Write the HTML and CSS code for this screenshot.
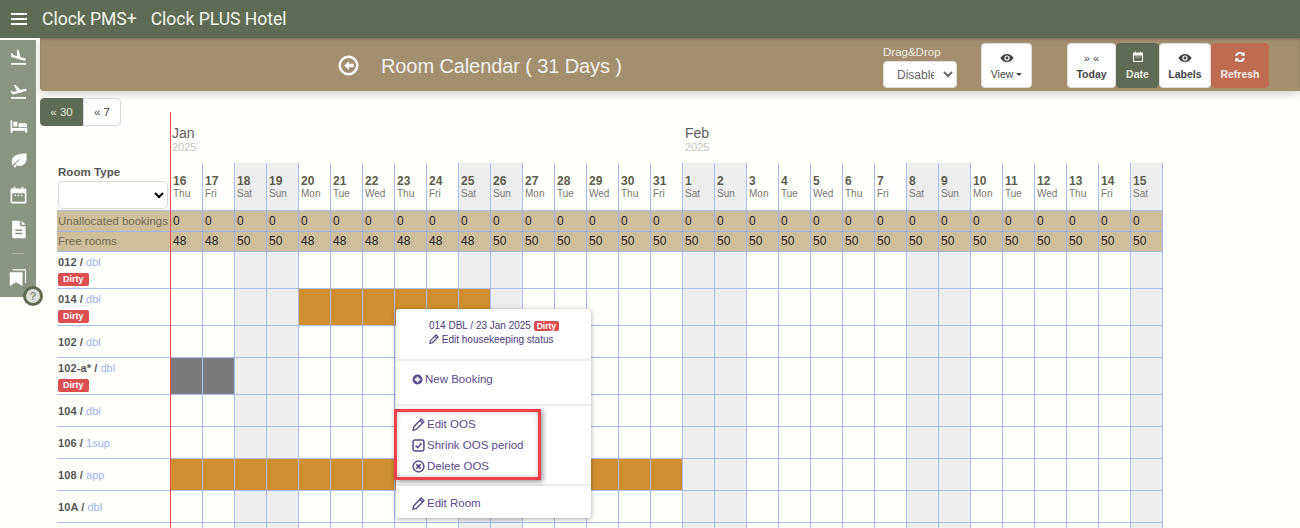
FILE: index.html
```html
<!DOCTYPE html>
<html lang="en">
<head>
<meta charset="utf-8">
<title>Room Calendar</title>
<link rel="stylesheet" href="styles.css">
</head>
<body>
<header class="topbar">
  <button class="burger" aria-label="Menu"><span></span><span></span><span></span></button>
  <span class="brand">Clock PMS+</span>
  <span class="brand">Clock PLUS Hotel</span>
</header>
<div class="shell">
  <nav class="sidebar">
    <a class="nav-item"><svg viewBox="0 0 24 24" class="nav-icon"><path d="M2.5 19h19v2h-19zm7.18-5.73l4.35 1.16 5.31 1.42c.8.21 1.62-.26 1.84-1.06.21-.8-.26-1.62-1.06-1.84l-5.31-1.42-2.76-9.02L10.12 2v8.28L5.15 8.95l-.93-2.32-1.45-.39v5.17l1.6.43 5.31 1.43z"/></svg></a>
    <a class="nav-item"><svg viewBox="0 0 24 24" class="nav-icon"><path d="M2.5 19h19v2h-19zm19.57-9.36c-.21-.8-1.04-1.28-1.84-1.06L14.92 10l-6.9-6.43-1.93.51 4.14 7.17-4.97 1.33-1.97-1.54-1.45.39 1.82 3.16.77 1.33 1.6-.43 5.31-1.42 4.35-1.16L21 11.49c.81-.23 1.28-1.05 1.07-1.85z"/></svg></a>
    <a class="nav-item"><svg viewBox="0 0 24 24" class="nav-icon"><path d="M2 4h2v10h18a1 1 0 0 1 1 1v5h-2.5v-2.500h-16V20H2zM5.500 6h5v6h-5zM12 8h9a1.500 1.500 0 0 1 1.500 1.500V13H12z" fill-rule="evenodd"/></svg></a>
    <a class="nav-item"><svg viewBox="0 0 24 24" class="nav-icon"><path d="M22 3C14 3 5 4 3.500 12c-.5 2.500.3 5 1.200 6.500C8 13 12 11 15 10c-3.500 2.500-7 5.500-9 10l2 1c.7-1.300 1.200-2.200 1.800-3 3 1.500 7 1.200 9.700-1.500C23 13 22.500 7 22 3z"/></svg></a>
    <a class="nav-item"><svg viewBox="0 0 24 24" class="nav-icon"><path fill-rule="evenodd" d="M6 1h2v2h8V1h2v2h2.500A1.500 1.500 0 0 1 22 4.500v16a1.500 1.500 0 0 1-1.500 1.500h-17A1.500 1.500 0 0 1 2 20.500v-16A1.500 1.500 0 0 1 3.500 3H6zM4 9v11h16V9zM7 11h2v2H7zm4 0h2v2h-2zm4 0h2v2h-2z"/></svg></a>
    <a class="nav-item"><svg viewBox="0 0 24 24" class="nav-icon"><path fill-rule="evenodd" d="M5 1h9v7h7v13.500a1.500 1.500 0 0 1-1.500 1.500h-14.500A1.500 1.500 0 0 1 4 21.500v-19A1.500 1.500 0 0 1 5 1zM16 1l5 5h-5zM8 12v2h9v-2zm0 4v2h9v-2z"/></svg></a>
    <span class="nav-sep"></span>
    <a class="nav-item"><svg viewBox="0 0 24 24" class="nav-icon book"><path d="M1 5.500h17V24l-8.500-5L1 24z"/><path d="M5 2.500h17V20" fill="none" stroke="#fff" stroke-width="1.500"/></svg></a>
    <span class="help">?</span>
  </nav>
  <main class="main">
    <section class="subheader">
      <div class="title-block">
        <svg class="back" viewBox="0 0 24 24"><circle cx="12" cy="12" r="10" fill="none" stroke="#fff" stroke-width="2.800"/><path d="M12.500 7L7 12l5.500 5v-3H18v-4h-5.500z" fill="#fff"/></svg>
        <h1 class="title">Room Calendar ( 31 Days )</h1>
      </div>
      <div class="dnd">
        <label class="dnd-label">Drag&amp;Drop</label>
        <select class="dnd-select"><option>Disabled</option></select>
      </div>
      <button class="tool view-btn"><svg class="eye" viewBox="0 0 24 16"><path fill-rule="evenodd" d="M12 1C7 1 3 4 .5 8 3 12 7 15 12 15s9-3 11.500-7C21 4 17 1 12 1zm0 2.500a4.500 4.500 0 1 1 0 9 4.500 4.500 0 0 1 0-9z"/><circle cx="12" cy="8" r="2.500"/></svg><span>View <i class="caret"></i></span></button>
      <div class="tool-group">
        <button class="tool bold"><span class="arrows">» «</span><span>Today</span></button>
        <button class="tool bold active"><svg class="cal" viewBox="0 0 24 24"><path fill-rule="evenodd" fill="#fff" d="M6 1h2v2h8V1h2v2h2.500A1.500 1.500 0 0 1 22 4.500v16a1.500 1.500 0 0 1-1.500 1.500h-17A1.500 1.500 0 0 1 2 20.500v-16A1.500 1.500 0 0 1 3.500 3H6zM4 9v11h16V9zM7 11h2v2H7zm4 0h2v2h-2zm4 0h2v2h-2z"/></svg><span>Date</span></button>
        <button class="tool bold"><svg class="eye" viewBox="0 0 24 16"><path fill-rule="evenodd" d="M12 1C7 1 3 4 .5 8 3 12 7 15 12 15s9-3 11.500-7C21 4 17 1 12 1zm0 2.500a4.500 4.500 0 1 1 0 9 4.500 4.500 0 0 1 0-9z"/><circle cx="12" cy="8" r="2.500"/></svg><span>Labels</span></button>
        <button class="tool bold refresh"><svg class="ref" viewBox="0 0 24 24"><path fill="none" stroke="#fff" stroke-width="3.600" d="M4 10a8.500 8.500 0 0 1 14.500-3.500M20 14a8.500 8.500 0 0 1-14.500 3.500"/><path fill="#fff" d="M21.500 1.500v8h-8zM2.500 22.500v-8h8z"/></svg><span>Refresh</span></button>
      </div>
    </section>
    <div class="tabs"><button class="tab on">« 30</button><button class="tab">« 7</button></div>
    <div class="months">
      <div class="month"><div class="month-name">Jan</div><div class="month-year">2025</div></div>
      <div class="month"><div class="month-name">Feb</div><div class="month-year">2025</div></div>
    </div>
    <div class="calendar">
      <div class="row head-row">
        <div class="label head-label"><div class="rt">Room Type</div><select class="rt-select"><option></option></select></div>
        <div class="cells">
          <div class="day"><b>16</b><span>Thu</span></div><div class="day"><b>17</b><span>Fri</span></div><div class="day we"><b>18</b><span>Sat</span></div><div class="day we"><b>19</b><span>Sun</span></div><div class="day"><b>20</b><span>Mon</span></div><div class="day"><b>21</b><span>Tue</span></div><div class="day"><b>22</b><span>Wed</span></div><div class="day"><b>23</b><span>Thu</span></div><div class="day"><b>24</b><span>Fri</span></div><div class="day we"><b>25</b><span>Sat</span></div><div class="day we"><b>26</b><span>Sun</span></div><div class="day"><b>27</b><span>Mon</span></div><div class="day"><b>28</b><span>Tue</span></div><div class="day"><b>29</b><span>Wed</span></div><div class="day"><b>30</b><span>Thu</span></div><div class="day"><b>31</b><span>Fri</span></div><div class="day we"><b>1</b><span>Sat</span></div><div class="day we"><b>2</b><span>Sun</span></div><div class="day"><b>3</b><span>Mon</span></div><div class="day"><b>4</b><span>Tue</span></div><div class="day"><b>5</b><span>Wed</span></div><div class="day"><b>6</b><span>Thu</span></div><div class="day"><b>7</b><span>Fri</span></div><div class="day we"><b>8</b><span>Sat</span></div><div class="day we"><b>9</b><span>Sun</span></div><div class="day"><b>10</b><span>Mon</span></div><div class="day"><b>11</b><span>Tue</span></div><div class="day"><b>12</b><span>Wed</span></div><div class="day"><b>13</b><span>Thu</span></div><div class="day"><b>14</b><span>Fri</span></div><div class="day we"><b>15</b><span>Sat</span></div>
        </div>
      </div>
      <div class="row sum-row h21">
        <div class="label sum-label">Unallocated bookings</div>
        <div class="cells"><div class="num">0</div><div class="num">0</div><div class="num">0</div><div class="num">0</div><div class="num">0</div><div class="num">0</div><div class="num">0</div><div class="num">0</div><div class="num">0</div><div class="num">0</div><div class="num">0</div><div class="num">0</div><div class="num">0</div><div class="num">0</div><div class="num">0</div><div class="num">0</div><div class="num">0</div><div class="num">0</div><div class="num">0</div><div class="num">0</div><div class="num">0</div><div class="num">0</div><div class="num">0</div><div class="num">0</div><div class="num">0</div><div class="num">0</div><div class="num">0</div><div class="num">0</div><div class="num">0</div><div class="num">0</div><div class="num">0</div></div>
      </div>
      <div class="row sum-row h20">
        <div class="label sum-label">Free rooms</div>
        <div class="cells"><div class="num">48</div><div class="num">48</div><div class="num">50</div><div class="num">50</div><div class="num">48</div><div class="num">48</div><div class="num">48</div><div class="num">48</div><div class="num">48</div><div class="num">48</div><div class="num">50</div><div class="num">50</div><div class="num">50</div><div class="num">50</div><div class="num">50</div><div class="num">50</div><div class="num">50</div><div class="num">50</div><div class="num">50</div><div class="num">50</div><div class="num">50</div><div class="num">50</div><div class="num">50</div><div class="num">50</div><div class="num">50</div><div class="num">50</div><div class="num">50</div><div class="num">50</div><div class="num">50</div><div class="num">50</div><div class="num">50</div></div>
      </div>
      <div class="row tall"><div class="label room"><div><b>012 /</b> <em>dbl</em></div><span class="dirty">Dirty</span></div><div class="track"></div></div>
      <div class="row tall"><div class="label room"><div><b>014 /</b> <em>dbl</em></div><span class="dirty">Dirty</span></div><div class="track"><div class="bar orange b014"></div></div></div>
      <div class="row"><div class="label room mid"><div><b>102 /</b> <em>dbl</em></div></div><div class="track"></div></div>
      <div class="row tall"><div class="label room"><div><b>102-a* /</b> <em>dbl</em></div><span class="dirty">Dirty</span></div><div class="track"><div class="bar grey b102a"></div></div></div>
      <div class="row"><div class="label room mid"><div><b>104 /</b> <em>dbl</em></div></div><div class="track"></div></div>
      <div class="row"><div class="label room mid"><div><b>106 /</b> <em>1sup</em></div></div><div class="track"></div></div>
      <div class="row"><div class="label room mid"><div><b>108 /</b> <em>app</em></div></div><div class="track"><div class="bar orange b108"></div></div></div>
      <div class="row"><div class="label room mid"><div><b>10A /</b> <em>dbl</em></div></div><div class="track"></div></div>
      <div class="row"><div class="label room"></div><div class="track"></div></div>
    </div>
  </main>
</div>
<div class="now-line"></div>
<div class="popup">
  <div class="pop-sec pop-head">
    <div>014 DBL / 23 Jan 2025 <span class="dirty small">Dirty</span></div>
    <div class="pop-edit"><svg class="pi s10" viewBox="0 0 24 24"><path d="M17 2l5 5L8 21l-6 1.500L3.500 16zM15 6.500l2.500 2.500" fill="none" stroke="currentColor" stroke-width="2.600"/></svg> Edit housekeeping status</div>
  </div>
  <div class="pop-sec pop-new">
    <div class="pop-item"><svg class="pi plus" viewBox="0 0 24 24"><path fill-rule="evenodd" fill="currentColor" d="M12 1a11 11 0 1 1 0 22 11 11 0 0 1 0-22zm-2 5v4H6v4h4v4h4v-4h4v-4h-4V6z"/></svg>New Booking</div>
  </div>
  <div class="pop-sec pop-oos">
    <div class="pop-item"><svg class="pi" viewBox="0 0 24 24"><path d="M17 2l5 5L8 21l-6 1.500L3.500 16zM15 5l4 4" fill="none" stroke="currentColor" stroke-width="2.600"/></svg>Edit OOS</div>
    <div class="pop-item"><svg class="pi" viewBox="0 0 24 24"><rect x="2" y="2" width="20" height="20" rx="3" fill="none" stroke="currentColor" stroke-width="2.800"/><path d="M6.500 12l4 4 7-8" fill="none" stroke="currentColor" stroke-width="3"/></svg>Shrink OOS period</div>
    <div class="pop-item"><svg class="pi" viewBox="0 0 24 24"><circle cx="12" cy="12" r="10" fill="none" stroke="currentColor" stroke-width="2.800"/><path d="M8 8l8 8M16 8l-8 8" stroke="currentColor" stroke-width="3.200"/></svg>Delete OOS</div>
  </div>
  <div class="pop-sec pop-room">
    <div class="pop-item"><svg class="pi" viewBox="0 0 24 24"><path d="M17 2l5 5L8 21l-6 1.500L3.500 16zM15 5l4 4" fill="none" stroke="currentColor" stroke-width="2.600"/></svg>Edit Room</div>
  </div>
</div>
<div class="highlight"></div>
</body>
</html>
```
FILE: styles.css
```css
* { box-sizing: border-box; }
html, body { margin: 0; height: 528px; overflow: hidden; }
body { background: #fffffb; font-family: "Liberation Sans", Arial, sans-serif; color: #555; position: relative; }
button { font-family: inherit; }

.topbar { height: 38px; background: #5f6b54; display: flex; align-items: center; padding-left: 11px; color: #f4f5ef; }
.burger { width: 16px; height: 12px; padding: 0; border: 0; background: none; display: flex; flex-direction: column; justify-content: space-between; margin-right: 15px; }
.burger span { display: block; height: 2px; background: #fff; }
.brand { font-family: Roboto, sans-serif; font-size: 17.500px; margin-right: 14px; }

.shell { display: flex; height: 490px; overflow: hidden; }
.sidebar { width: 36px; height: 257px; margin-top: 2px; background: #8a9483; flex: none; margin-right: 4px; display: flex; flex-direction: column; align-items: center; position: relative; }
.nav-item { height: 34.500px; width: 100%; display: flex; align-items: center; justify-content: center; flex: none; }
.nav-icon { width: 19px; height: 19px; fill: #fff; }
.nav-sep { width: 12px; height: 1px; background: #a7afa0; margin: 6px 0 6px; flex: none; }
.nav-item .book { width: 18px; height: 18px; }
.help { position: absolute; left: 23px; bottom: -9px; width: 20px; height: 20px; border-radius: 50%; border: 3px solid #606b56; background: #dedfd8; color: #8a8f84; font-size: 11px; font-weight: bold; display: flex; align-items: center; justify-content: center; }

.main { flex: 1; min-width: 0; }
.subheader { height: 53px; background: #a38f6e; border-bottom-left-radius: 4px; box-shadow: 0 3px 8px rgba(0,0,0,.18), inset 0 2px 2px rgba(0,0,0,.15); display: flex; align-items: center; color: #f3f1ea; padding: 2px 0 0 298px; }
.title-block { display: flex; align-items: center; width: 545px; flex: none; }
.back { width: 21px; height: 21px; margin-right: 22px; flex: none; }
.title { font-size: 20px; font-weight: normal; margin: 2px 0 0; letter-spacing: -.1px; }
.dnd { width: 98px; flex: none; display: flex; flex-direction: column; margin-top: 3px; }
.dnd-label { font-size: 11.500px; line-height: 13px; color: #f1ede2; }
.dnd-select { width: 74px; height: 27px; margin-top: 2px; border: 1px solid #ddd; border-radius: 4px; background: #fff; color: #666; font: 12px "Liberation Sans", Arial, sans-serif; padding: 0 6px 0 9px; }
.tool { border: 1px solid #ddd; background: #fff; color: #444; border-radius: 4px; height: 45px; padding: 2px 0 0; font-size: 10.500px; display: flex; flex-direction: column; align-items: center; justify-content: center; gap: 5px; }
.view-btn { width: 51px; margin-right: 35px; flex: none; }
.tool-group { display: flex; }
.tool-group .tool:nth-child(1) { width: 49px; }
.tool-group .tool:nth-child(2) { width: 43px; }
.tool-group .tool:nth-child(3) { width: 52px; }
.tool-group .tool:nth-child(4) { width: 58px; }
.bold { font-weight: bold; }
.active { background: #5f6b54; border-color: #5f6b54; color: #e8eae2; }
.refresh { background: #bf6b52; border-color: #bf6b52; color: #f7efe9; }
.eye { width: 14px; height: 10px; fill: #444; }
.cal { width: 12px; height: 12px; margin-top: -3px; }
.ref { width: 12px; height: 12px; margin-top: -3px; }
.arrows { font-size: 11px; font-weight: normal; line-height: 9px; }
.caret { display: inline-block; width: 0; height: 0; border: 3px solid transparent; border-top-color: #444; border-bottom: 0; vertical-align: 2px; }

.tabs { display: flex; margin-top: 7px; height: 28px; }
.tab { height: 28px; border: 1px solid #d5d9df; background: #fff; color: #444; font-size: 11.500px; padding: 0; width: 38px; border-radius: 0 4px 4px 0; }
.tab.on { width: 43px; background: #5f6b54; border-color: #5f6b54; color: #e4e6de; border-radius: 4px 0 0 4px; }

.months { display: flex; margin-left: 132px; height: 37px; }
.month { width: 513px; }
.month-name { font-size: 14px; line-height: 15px; color: #5e5e5e; }
.month-year { font-size: 11px; line-height: 12px; color: #c4c4c4; }

.calendar { margin-left: 17px; width: 1106px; }
.row { display: flex; height: 32px; border-bottom: 1px solid #a9bcf8; }
.row.tall { height: 37px; }
.head-row { height: 48px; }
.h21 { height: 21px; }
.h20 { height: 20px; }
.label { width: 113px; flex: none; padding-left: 1px; }
.head-label { padding-top: 3px; }
.rt { font-size: 11.500px; font-weight: bold; line-height: 13px; letter-spacing: .05px; }
.rt-select { display: block; width: 110px; height: 28px; margin-top: 2px; background: #fff; border: 1px solid #ddd; border-radius: 4px; }
.cells { display: flex; flex: 1; border-right: 1px solid #a9bcf8; }
.day { width: 32px; flex: none; border-left: 1px solid #a9bcf8; padding: 11px 0 0 2px; display: flex; flex-direction: column; }
.day b { font-size: 12px; line-height: 14px; color: #5c5c4c; }
.day span { font-size: 10px; line-height: 11px; color: #777; }
.we { background: #eeeeee; }
.sum-row { background: #cebf9b; border-bottom-color: #9db2f5; }
.sum-row .cells { border-right-color: #9db2f5; }
.sum-label { font-size: 11.500px; color: #6e6c54; padding-left: 1px; white-space: nowrap; }
.num { width: 32px; flex: none; border-left: 1px solid #9db2f5; padding-left: 2px; font-size: 12px; color: #222; }
.h21 .sum-label, .h21 .num { line-height: 21px; }
.h20 .sum-label, .h20 .num { line-height: 18px; }

.room { font-size: 11px; padding-left: 1px; padding-top: 4px; }
.room.mid { display: flex; align-items: center; padding-top: 0; }
.room b { color: #555; letter-spacing: .1px; }
.room em { font-style: normal; color: #9fb3f5; }
.dirty { display: inline-block; background: #dc4f50; color: #fff; font-size: 9px; font-weight: bold; line-height: 13px; padding: 0 5px; border-radius: 2px; margin-top: 5px; }
.dirty.small { font-size: 8.500px; line-height: 10px; padding: 0 3px; margin-top: 0; }

.track { flex: 1; display: grid; grid-template-columns: repeat(31, 32px); border-right: 1px solid #a9bcf8;
  background:
    repeating-linear-gradient(90deg, #a9bcf8 0 1px, transparent 1px 32px),
    linear-gradient(#eee, #eee) 64px 0 / 64px 100% no-repeat,
    linear-gradient(#eee, #eee) 288px 0 / 64px 100% no-repeat,
    linear-gradient(#eee, #eee) 512px 0 / 64px 100% no-repeat,
    linear-gradient(#eee, #eee) 736px 0 / 64px 100% no-repeat,
    linear-gradient(#eee, #eee) 960px 0 / 32px 100% no-repeat;
}
.bar { grid-row: 1; }
.orange { background: repeating-linear-gradient(90deg, #a9bcf8 0 1px, #d08f2e 1px 32px); }
.grey { background: repeating-linear-gradient(90deg, #a9bcf8 0 1px, #7b7b7b 1px 32px); }
.b014 { grid-column: 5 / span 6; }
.b102a { grid-column: 1 / span 2; }
.b108 { grid-column: 1 / span 16; }

.now-line { position: absolute; left: 170px; top: 112px; bottom: 0; width: 1px; background: #f4494f; }

.popup { position: absolute; left: 396px; top: 309px; width: 195px; height: 209px; background: #fff; border-radius: 3px; box-shadow: 0 1px 5px rgba(0,0,0,.35); color: #5b4a8f; display: flex; flex-direction: column; }
.pop-sec { border-bottom: 2px solid #eeeeee; flex: none; }
.pop-sec:last-child { border-bottom: 0; }
.pop-head { height: 52px; padding: 10px 0 0 33px; font-size: 10px; line-height: 13px; color: #4b3a7c; }
.pop-edit { margin-top: 1px; }
.pop-new { height: 45px; padding: 8px 0 0 16px; }
.pop-oos { height: 80px; padding: 8px 0 0 16px; }
.pop-room { height: 32px; padding: 7px 0 0 16px; }
.pop-item { font-size: 11.500px; line-height: 21px; height: 21px; display: flex; align-items: center; gap: 2px; white-space: nowrap; }
.pop-item .pi { width: 13px; height: 13px; flex: none; }
.pop-item .plus { width: 11px; height: 11px; }
.pi.s10 { width: 10px; height: 10px; vertical-align: -1px; }

.highlight { position: absolute; left: 394px; top: 409px; width: 147px; height: 71px; border: 3px solid #f2404a; box-shadow: 2px 2px 5px rgba(0,0,0,.4), inset 0 0 4px rgba(0,0,0,.25); }
```
